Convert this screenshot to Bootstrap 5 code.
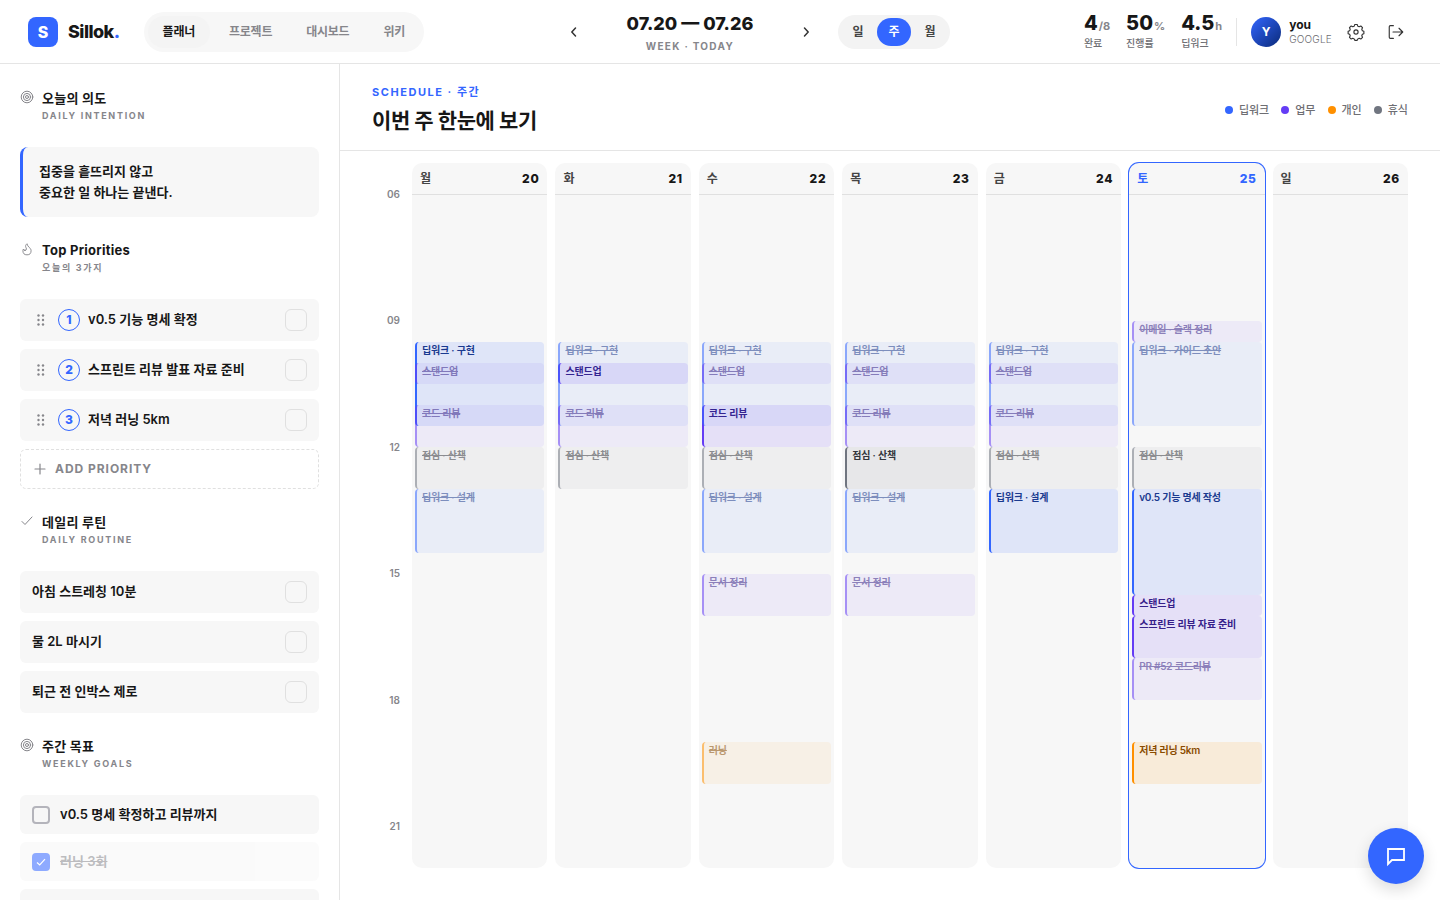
<!DOCTYPE html>
<html lang="ko">
<head>
<meta charset="utf-8">
<meta name="viewport" content="width=device-width, initial-scale=1">
<title>Sillok</title>
<link href="https://cdn.jsdelivr.net/npm/bootstrap@5.3.0/dist/css/bootstrap.min.css" rel="stylesheet">
<style>
:root{--blue:#3366ff;--ink:#171717;--mute:#86868b;--line:#e5e5e5;--soft:#f7f7f7}
body{font-family:Inter,"Noto Sans CJK KR",sans-serif;font-size:13px;color:var(--ink);background:#fff}
svg{display:block;fill:none;stroke:currentColor;stroke-linecap:round;stroke-linejoin:round}
button{border:0;background:none;padding:0;color:inherit}
.topbar{height:64px;padding:0 28px;border-bottom:1px solid var(--line)}
.brand-link{gap:10px}
.logo-box{width:30px;height:30px;border-radius:8px;background:var(--blue);font-size:16px;font-weight:800}
.brand-name{font-size:18px;font-weight:800;letter-spacing:-.03em;color:var(--ink)}
.pill-nav{padding:4px;gap:4px;border-radius:20px;background:var(--soft);margin-left:24px}
.pill-nav a{height:32px;line-height:32px;padding:0 15px;border-radius:16px;font-size:12px;font-weight:600;letter-spacing:-.02em;color:var(--mute);text-decoration:none}
.pill-nav a.active{background:#f4f4f4;color:var(--ink)}
.tool{width:32px;height:32px;color:#333}
.range-box{width:200px;padding-top:4px}
.range-title{font-size:18px;font-weight:800;line-height:24px}
.range-sub{font-size:10px;font-weight:700;letter-spacing:.13em;line-height:20px;color:var(--mute)}
.seg{padding:3px;gap:2px;border-radius:17px;background:#f3f3f3;margin-left:16px}
.seg button{width:34px;height:28px;border-radius:14px;font-size:12px;font-weight:600;line-height:28px;color:#444}
.seg button.active{background:var(--blue);color:#fff}
.stat-num{font-size:20px;font-weight:800;line-height:20px}
.stat-num small{font-size:11px;font-weight:700;color:var(--mute);margin-left:1px}
.stat-label{font-size:10px;font-weight:500;line-height:14px;color:#6e6e73}
.rule{width:1px;height:28px;background:var(--line);margin:0 14px}
.avatar{width:30px;height:30px;background:linear-gradient(135deg,#3366ff,#0a2a78);font-size:12px;font-weight:700}
.user-name{font-size:12px;font-weight:700;line-height:16px}
.user-via{font-size:10px;font-weight:300;line-height:13px;letter-spacing:.02em;color:#6e6e73}
.side{width:340px;padding:25px 20px;border-right:1px solid var(--line)}
.side-head{margin-bottom:22px;gap:8px;color:var(--mute)}
.side-head h2{font-size:13px;font-weight:700;line-height:18px;letter-spacing:.02em;color:var(--ink);margin:0}
.side-head p{font-size:9px;font-weight:700;line-height:18px;letter-spacing:.19em;margin:0}
.side-head svg{width:14px;height:14px;margin-top:1px}
.side section{margin-bottom:24px}
.intent{padding:14px 16px;border-left:3px solid var(--blue);border-radius:8px;background:var(--soft);font-weight:600;line-height:21px;margin:0}
.item{min-height:42px;padding:0 12px;border-radius:6px;background:var(--soft);font-weight:600;gap:8px}
.goal{min-height:39px;gap:10px}
.goal.done{opacity:.55}
.goal.done label{text-decoration:line-through;color:var(--mute)}
.rank{width:22px;height:22px;border:1px solid var(--blue);border-radius:50%;color:var(--blue);font-size:12px;font-weight:800}
.grip{width:18px;height:18px;fill:#86868b;stroke:none}
.tick{appearance:none;width:22px;height:22px;margin:0;border:1px solid #e0e0e0;border-radius:6px;flex:none}
.goal .tick{width:18px;height:18px;border:2px solid #b4b4bb;border-radius:4px}
.goal .tick:checked{border-color:var(--blue);background:var(--blue) url("data:image/svg+xml,%3Csvg xmlns='http://www.w3.org/2000/svg' viewBox='0 0 14 14' fill='none' stroke='white' stroke-width='1.2'%3E%3Cpath d='M3 7.5 5.700 10 11 4.200'/%3E%3C/svg%3E") center/14px}
.add{height:40px;padding:0 13px;border:1px dashed #e0e0e0;border-radius:6px;gap:9px;font-size:12px;font-weight:700;letter-spacing:.08em;color:var(--mute)}
.main-head{height:87px;padding:6px 32px 0;border-bottom:1px solid var(--line)}
.eyebrow{font-size:11px;font-weight:700;letter-spacing:.14em;line-height:16px;color:var(--blue);margin:0}
.main-head h1{font-size:21px;font-weight:700;line-height:32px;letter-spacing:-.02em;margin:5px 0 0}
.legend{gap:12px;font-size:11px;font-weight:500;margin:0}
.legend li{gap:6px}
.legend .text-key{color:#6e6e73}
.dot{width:8px;height:8px;border-radius:50%;background:var(--c)}
.week{padding:12px 32px 32px}
.hours{width:40px;padding:31px 12px 0 0;display:grid;grid-template-rows:repeat(16,1fr);font-size:10px;font-weight:600;line-height:0;text-align:right;color:var(--mute)}
.days{display:grid;grid-template-columns:repeat(7,1fr);gap:8px}
.day{border-radius:10px;background:var(--soft);min-width:0}
.day header{height:32px;padding:0 8px;border-bottom:1px solid #e0e0e0;font-size:12px;font-weight:600;color:#444}
.day header b{font-size:12px;font-weight:800;letter-spacing:.06em;color:var(--ink)}
.day.today{box-shadow:0 0 0 1px var(--blue)}
.day.today header,.day.today header b{color:var(--blue)}
.slots{display:grid;grid-template:repeat(32,minmax(0,1fr))/minmax(0,1fr);padding:0 3px}
.ev{grid-column:1;padding:1px 5px;border-left:2px solid var(--c);border-radius:4px;font-size:10px;font-weight:600;line-height:15px;letter-spacing:-.02em;overflow:hidden;white-space:nowrap;min-height:0;background:color-mix(in srgb,var(--c) 12%,transparent)}
.deep{--c:#3366ff;color:#1a3a8f}
.work{--c:#643cf5;color:#35208a}
.life{--c:#ff9000;color:#8a4b00}
.rest{--c:#707580;color:#33363c}
.ev.off{opacity:.55;text-decoration:line-through}
.chat{right:16px;bottom:16px;width:56px;height:56px;background:var(--blue);box-shadow:0 6px 16px rgba(0,0,0,.14)}
.chat svg{stroke-linejoin:miter}
</style>
</head>
<body class="vh-100 d-flex flex-column overflow-hidden">
<nav class="topbar d-flex align-items-center justify-content-between flex-shrink-0">
  <div class="d-flex align-items-center">
    <a href="#" class="brand-link d-flex align-items-center text-decoration-none">
      <span class="logo-box d-flex align-items-center justify-content-center text-white">S</span>
      <span class="brand-name">Sillok<span style="color:var(--blue)">.</span></span>
    </a>
    <div class="pill-nav d-flex">
      <a href="#" class="active">플래너</a><a href="#">프로젝트</a><a href="#">대시보드</a><a href="#">위키</a>
    </div>
  </div>
  <div class="d-flex align-items-center">
    <button class="tool d-flex align-items-center justify-content-center" aria-label="이전 주"><svg width="16" height="16" viewBox="0 0 16 16" stroke-width="1.5"><path d="M9.500 4 5.800 8l3.700 4"/></svg></button>
    <div class="range-box text-center">
      <div class="range-title">07.20 — 07.26</div>
      <div class="range-sub">WEEK · TODAY</div>
    </div>
    <button class="tool d-flex align-items-center justify-content-center" aria-label="다음 주"><svg width="16" height="16" viewBox="0 0 16 16" stroke-width="1.5"><path d="M6.500 4 10.200 8l-3.700 4"/></svg></button>
    <div class="seg d-flex"><button>일</button><button class="active">주</button><button>월</button></div>
  </div>
  <div class="d-flex align-items-center">
    <div class="d-flex gap-3">
      <div><div class="stat-num">4<small>/8</small></div><div class="stat-label">완료</div></div>
      <div><div class="stat-num">50<small>%</small></div><div class="stat-label">진행률</div></div>
      <div><div class="stat-num">4.5<small>h</small></div><div class="stat-label">딥워크</div></div>
    </div>
    <div class="rule"></div>
    <div class="avatar rounded-circle d-flex align-items-center justify-content-center text-white me-2">Y</div>
    <div class="me-2"><div class="user-name">you</div><div class="user-via">GOOGLE</div></div>
    <button class="tool d-flex align-items-center justify-content-center me-2" aria-label="설정"><svg width="18" height="18" viewBox="0 0 24 24" stroke-width="1.5"><circle cx="12" cy="12" r="2.800"/><path d="M9.600 4.200 10.400 2h3.200l.8 2.200 1.900.8 2.100-1 2.300 2.300-1 2.100.8 1.900 2 .8v3.200l-2 .8-.8 1.900 1 2.100-2.300 2.300-2.100-1-1.900.8-.8 2h-3.200l-.8-2-1.900-.8-2.100 1-2.300-2.300 1-2.100-.8-1.900-2-.8v-3.200l2-.8.8-1.900-1-2.100L5.600 4l2.100 1z"/></svg></button>
    <button class="tool d-flex align-items-center justify-content-center" aria-label="로그아웃"><svg width="18" height="18" viewBox="0 0 24 24" stroke-width="1.5"><path d="M8.500 3.500H4.500Q3 3.500 3 5v14q0 1.500 1.500 1.500h4M8 12h13M16 7l5 5-5 5"/></svg></button>
  </div>
</nav>

<div class="d-flex flex-grow-1 overflow-hidden">
  <aside class="side flex-shrink-0 overflow-hidden">
    <section>
      <div class="side-head d-flex"><svg viewBox="0 0 14 14" stroke-width="1"><circle cx="7" cy="7" r="5.800"/><circle cx="7" cy="7" r="3.600"/><circle cx="7" cy="7" r="1.500"/></svg><div><h2>오늘의 의도</h2><p>DAILY INTENTION</p></div></div>
      <p class="intent">집중을 흩뜨리지 않고<br>중요한 일 하나는 끝낸다.</p>
    </section>
    <section>
      <div class="side-head d-flex"><svg viewBox="0 0 24 24" stroke-width="1.600"><path d="M8.500 14.500A2.500 2.500 0 0 0 11 12c0-1.380-.5-2-1-3-1.070-2.140-.22-4.050 2-6 .5 2.500 2 4.900 4 6.500s3 3.500 3 5.500a7 7 0 1 1-14 0c0-1.150.43-2.290 1-3a2.500 2.500 0 0 0 2.500 2.500z"/></svg><div><h2>Top Priorities</h2><p>오늘의 3가지</p></div></div>
      <div class="d-grid gap-2">
        <div class="item d-flex align-items-center"><svg class="grip" viewBox="0 0 18 18"><use href="#dots"/></svg><span class="rank d-flex align-items-center justify-content-center">1</span><label for="p1" class="flex-grow-1">v0.5 기능 명세 확정</label><input class="tick" type="checkbox" id="p1"></div>
        <div class="item d-flex align-items-center"><svg class="grip" viewBox="0 0 18 18"><use href="#dots"/></svg><span class="rank d-flex align-items-center justify-content-center">2</span><label for="p2" class="flex-grow-1">스프린트 리뷰 발표 자료 준비</label><input class="tick" type="checkbox" id="p2"></div>
        <div class="item d-flex align-items-center"><svg class="grip" viewBox="0 0 18 18"><use href="#dots"/></svg><span class="rank d-flex align-items-center justify-content-center">3</span><label for="p3" class="flex-grow-1">저녁 러닝 5km</label><input class="tick" type="checkbox" id="p3"></div>
        <button class="add d-flex align-items-center"><svg width="12" height="12" viewBox="0 0 12 12" stroke-width="1.200"><path d="M6 1v10M1 6h10"/></svg>ADD PRIORITY</button>
      </div>
    </section>
    <section>
      <div class="side-head d-flex"><svg viewBox="0 0 14 14" stroke-width="1"><path d="m2 7.500 3 3L12 3"/></svg><div><h2>데일리 루틴</h2><p>DAILY ROUTINE</p></div></div>
      <div class="d-grid gap-2">
        <div class="item d-flex align-items-center"><label for="r1" class="flex-grow-1">아침 스트레칭 10분</label><input class="tick" type="checkbox" id="r1"></div>
        <div class="item d-flex align-items-center"><label for="r2" class="flex-grow-1">물 2L 마시기</label><input class="tick" type="checkbox" id="r2"></div>
        <div class="item d-flex align-items-center"><label for="r3" class="flex-grow-1">퇴근 전 인박스 제로</label><input class="tick" type="checkbox" id="r3"></div>
      </div>
    </section>
    <section>
      <div class="side-head d-flex"><svg viewBox="0 0 14 14" stroke-width="1"><circle cx="7" cy="7" r="5.800"/><circle cx="7" cy="7" r="3.600"/><circle cx="7" cy="7" r="1.500"/></svg><div><h2>주간 목표</h2><p>WEEKLY GOALS</p></div></div>
      <div class="d-grid gap-2">
        <div class="item goal d-flex align-items-center"><input class="tick" type="checkbox" id="g1"><label for="g1">v0.5 명세 확정하고 리뷰까지</label></div>
        <div class="item goal done d-flex align-items-center"><input class="tick" type="checkbox" id="g2" checked><label for="g2">러닝 3회</label></div>
        <div class="item goal"></div>
      </div>
    </section>
  </aside>

  <main class="flex-grow-1 d-flex flex-column">
    <div class="main-head d-flex align-items-center justify-content-between">
      <div><p class="eyebrow">SCHEDULE · 주간</p><h1>이번 주 한눈에 보기</h1></div>
      <ul class="legend list-unstyled d-flex">
        <li class="deep d-flex align-items-center"><span class="dot"></span><span class="text-key">딥워크</span></li>
        <li class="work d-flex align-items-center"><span class="dot"></span><span class="text-key">업무</span></li>
        <li class="life d-flex align-items-center"><span class="dot"></span><span class="text-key">개인</span></li>
        <li class="rest d-flex align-items-center"><span class="dot"></span><span class="text-key">휴식</span></li>
      </ul>
    </div>
    <div class="week d-flex flex-grow-1">
      <div class="hours flex-shrink-0">
        <span style="grid-row:1">06</span><span style="grid-row:4">09</span><span style="grid-row:7">12</span><span style="grid-row:10">15</span><span style="grid-row:13">18</span><span style="grid-row:16">21</span>
      </div>
      <div class="days flex-grow-1">
        <section class="day d-flex flex-column">
          <header class="d-flex align-items-center justify-content-between"><span>월</span><b>20</b></header>
          <div class="slots flex-grow-1">
            <div class="ev deep" style="grid-row:8/12">딥워크 · 구현</div>
            <div class="ev work off" style="grid-row:9/10">스탠드업</div>
            <div class="ev work off" style="grid-row:11/13">코드 리뷰</div>
            <div class="ev rest off" style="grid-row:13/15">점심 · 산책</div>
            <div class="ev deep off" style="grid-row:15/18">딥워크 · 설계</div>
          </div>
        </section>
        <section class="day d-flex flex-column">
          <header class="d-flex align-items-center justify-content-between"><span>화</span><b>21</b></header>
          <div class="slots flex-grow-1">
            <div class="ev deep off" style="grid-row:8/12">딥워크 · 구현</div>
            <div class="ev work" style="grid-row:9/10">스탠드업</div>
            <div class="ev work off" style="grid-row:11/13">코드 리뷰</div>
            <div class="ev rest off" style="grid-row:13/15">점심 · 산책</div>
          </div>
        </section>
        <section class="day d-flex flex-column">
          <header class="d-flex align-items-center justify-content-between"><span>수</span><b>22</b></header>
          <div class="slots flex-grow-1">
            <div class="ev deep off" style="grid-row:8/12">딥워크 · 구현</div>
            <div class="ev work off" style="grid-row:9/10">스탠드업</div>
            <div class="ev work" style="grid-row:11/13">코드 리뷰</div>
            <div class="ev rest off" style="grid-row:13/15">점심 · 산책</div>
            <div class="ev deep off" style="grid-row:15/18">딥워크 · 설계</div>
            <div class="ev work off" style="grid-row:19/21">문서 정리</div>
            <div class="ev life off" style="grid-row:27/29">러닝</div>
          </div>
        </section>
        <section class="day d-flex flex-column">
          <header class="d-flex align-items-center justify-content-between"><span>목</span><b>23</b></header>
          <div class="slots flex-grow-1">
            <div class="ev deep off" style="grid-row:8/12">딥워크 · 구현</div>
            <div class="ev work off" style="grid-row:9/10">스탠드업</div>
            <div class="ev work off" style="grid-row:11/13">코드 리뷰</div>
            <div class="ev rest" style="grid-row:13/15">점심 · 산책</div>
            <div class="ev deep off" style="grid-row:15/18">딥워크 · 설계</div>
            <div class="ev work off" style="grid-row:19/21">문서 정리</div>
          </div>
        </section>
        <section class="day d-flex flex-column">
          <header class="d-flex align-items-center justify-content-between"><span>금</span><b>24</b></header>
          <div class="slots flex-grow-1">
            <div class="ev deep off" style="grid-row:8/12">딥워크 · 구현</div>
            <div class="ev work off" style="grid-row:9/10">스탠드업</div>
            <div class="ev work off" style="grid-row:11/13">코드 리뷰</div>
            <div class="ev rest off" style="grid-row:13/15">점심 · 산책</div>
            <div class="ev deep" style="grid-row:15/18">딥워크 · 설계</div>
          </div>
        </section>
        <section class="day today d-flex flex-column">
          <header class="d-flex align-items-center justify-content-between"><span>토</span><b>25</b></header>
          <div class="slots flex-grow-1">
            <div class="ev work off" style="grid-row:7/8">이메일 · 슬랙 정리</div>
            <div class="ev deep off" style="grid-row:8/12">딥워크 · 가이드 초안</div>
            <div class="ev rest off" style="grid-row:13/15">점심 · 산책</div>
            <div class="ev deep" style="grid-row:15/20">v0.5 기능 명세 작성</div>
            <div class="ev work" style="grid-row:20/21">스탠드업</div>
            <div class="ev work" style="grid-row:21/23">스프린트 리뷰 자료 준비</div>
            <div class="ev work off" style="grid-row:23/25">PR #52 코드리뷰</div>
            <div class="ev life" style="grid-row:27/29">저녁 러닝 5km</div>
          </div>
        </section>
        <section class="day d-flex flex-column">
          <header class="d-flex align-items-center justify-content-between"><span>일</span><b>26</b></header>
          <div class="slots flex-grow-1"></div>
        </section>
      </div>
    </div>
  </main>
</div>
<button class="chat position-fixed rounded-circle text-white d-flex align-items-center justify-content-center" aria-label="채팅"><svg width="24" height="24" viewBox="0 0 24 24" stroke-width="1.800"><path d="M4 5h16v11H8l-4 4z"/></svg></button>
<svg class="d-none"><g id="dots"><circle cx="6.500" cy="4.500" r="1.200"/><circle cx="11" cy="4.500" r="1.200"/><circle cx="6.500" cy="9" r="1.200"/><circle cx="11" cy="9" r="1.200"/><circle cx="6.500" cy="13.500" r="1.200"/><circle cx="11" cy="13.500" r="1.200"/></g></svg>
<script src="https://cdn.jsdelivr.net/npm/bootstrap@5.3.0/dist/js/bootstrap.bundle.min.js"></script>
</body>
</html>
